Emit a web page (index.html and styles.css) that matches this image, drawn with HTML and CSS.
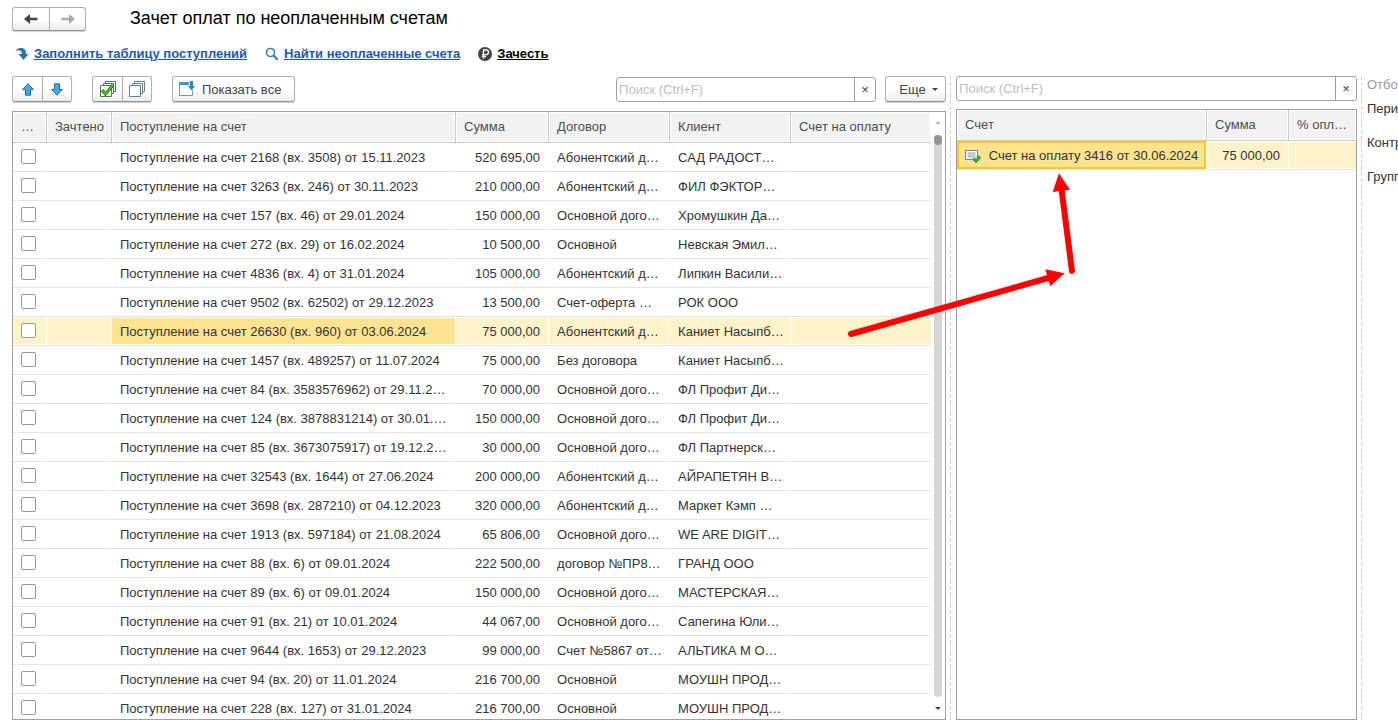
FILE: index.html
```html
<!DOCTYPE html>
<html lang="ru">
<head>
  <meta charset="UTF-8" />
  <meta name="viewport" content="width=device-width, initial-scale=1.0" />
  <title>Зачет оплат по неоплаченным счетам</title>
  <link rel="stylesheet" href="styles.css">
</head>
<body>

  <header class="title-bar">
    <div class="btn-group nav-group">
      <button class="btn" aria-label="Назад">
        <svg width="16" height="12" viewBox="0 0 16 12"><path d="M1 6l6-5v3.700h7.500v2.600H7V11z" fill="#444"/></svg>
      </button>
      <button class="btn" aria-label="Вперед">
        <svg width="16" height="12" viewBox="0 0 16 12"><path d="M15 6L9 1v3.700H1.500v2.600H9V11z" fill="#aaa"/></svg>
      </button>
    </div>
    <h1>Зачет оплат по неоплаченным счетам</h1>
  </header>

  <nav class="commands">
    <a href="#" class="command">
      <svg width="14" height="14" viewBox="0 0 14 14"><path d="M.5 4.500C1.500 1.500 4 1 6 1c3.500 0 5 2 5 6h2.500L8.500 13 3.500 7H7C7 4.500 5.500 3.200 3.500 3.200 2.200 3.200 1.200 3.700.5 4.500z" fill="#2a73a8"/></svg>
      <span>Заполнить таблицу поступлений</span>
    </a>
    <a href="#" class="command">
      <svg width="14" height="14" viewBox="0 0 14 14"><circle cx="5.500" cy="5.500" r="4" fill="none" stroke="#3b80b5" stroke-width="1.600"/><path d="M8.500 8.500l4.200 4.200" stroke="#3b80b5" stroke-width="2.200"/></svg>
      <span>Найти неоплаченные счета</span>
    </a>
    <a href="#" class="command command-main">
      <svg width="14" height="14" viewBox="0 0 14 14"><circle cx="7" cy="7" r="7" fill="#444"/><path d="M5.500 11.500V3h2.700a2.300 2.300 0 0 1 0 4.600H4M4 9.500h4" fill="none" stroke="#fff" stroke-width="1.300"/></svg>
      <span>Зачесть</span>
    </a>
  </nav>

  <main class="workspace">
    <section class="pane pane-payments">
      <div class="toolbar">
        <div class="btn-group">
          <button class="btn" aria-label="Вверх">
            <svg width="12" height="13" viewBox="0 0 12 13"><path d="M6 .7l5.300 5.800H8.500v5.700h-5V6.500H.7z" fill="#45a8e8" stroke="#286c9e"/></svg>
          </button>
          <button class="btn" aria-label="Вниз">
            <svg width="12" height="13" viewBox="0 0 12 13"><path d="M6 12.300L.7 6.500h2.800V.8h5v5.700h2.800z" fill="#45a8e8" stroke="#286c9e"/></svg>
          </button>
        </div>
        <div class="btn-group">
          <button class="btn" aria-label="Установить флажки">
            <svg width="16" height="16" viewBox="0 0 16 16" fill="#fff" stroke="#57707c"><path d="M5.500.5h10v10h-10z"/><path d="M3.500 2.500h10v10h-10z"/><path d="M.5 4.500h11v11H.5z"/><path d="M2 9l3.500 4L13 4" fill="none" stroke="#247c10" stroke-width="3.400"/><path d="M2.400 9.400l3.100 3.400L12.600 4.500" fill="none" stroke="#4fc21c" stroke-width="1.800"/></svg>
          </button>
          <button class="btn" aria-label="Снять флажки">
            <svg width="16" height="16" viewBox="0 0 16 16" fill="#fff" stroke="#66808c"><path d="M5.500.5h10v10h-10z"/><path d="M3.500 2.500h10v10h-10z"/><path d="M.5 4.500h11v11H.5z"/></svg>
          </button>
        </div>
        <button class="btn btn-text">
          <svg width="16" height="16" viewBox="0 0 16 16"><path d="M.5 2.500v12h13v-5M.5 2.500h9" fill="#fff" stroke="#8091a0"/><path d="M0 1h10v3H0z" fill="#3795dc"/><path d="M11 0h3v5h2l-3.500 4.500L9 5h2z" fill="#2585d0"/></svg>
          Показать все
        </button>
        <div class="search">
          <input type="text" placeholder="Поиск (Ctrl+F)" aria-label="Поиск поступлений">
          <button class="search-clear" aria-label="Очистить">×</button>
        </div>
        <button class="btn btn-more">Еще <span class="caret"></span></button>
      </div>

      <div class="grid-box">
        <table class="grid payments">
          <colgroup>
            <col class="col-check"><col class="col-done"><col><col class="col-sum"><col class="col-text"><col class="col-text"><col class="col-invoice">
          </colgroup>
          <thead>
            <tr><th>…</th><th>Зачтено</th><th>Поступление на счет</th><th>Сумма</th><th>Договор</th><th>Клиент</th><th>Счет на оплату</th></tr>
          </thead>
          <tbody>
            <tr><td><input type="checkbox" aria-label="2168"></td><td></td><td>Поступление на счет 2168 (вх. 3508) от 15.11.2023</td><td class="num">520 695,00</td><td>Абонентский д…</td><td>САД РАДОСТ…</td><td></td></tr>
            <tr><td><input type="checkbox" aria-label="3263"></td><td></td><td>Поступление на счет 3263 (вх. 246) от 30.11.2023</td><td class="num">210 000,00</td><td>Абонентский д…</td><td>ФИЛ ФЭКТОР…</td><td></td></tr>
            <tr><td><input type="checkbox" aria-label="157"></td><td></td><td>Поступление на счет 157 (вх. 46) от 29.01.2024</td><td class="num">150 000,00</td><td>Основной дого…</td><td>Хромушкин Да…</td><td></td></tr>
            <tr><td><input type="checkbox" aria-label="272"></td><td></td><td>Поступление на счет 272 (вх. 29) от 16.02.2024</td><td class="num">10 500,00</td><td>Основной</td><td>Невская Эмил…</td><td></td></tr>
            <tr><td><input type="checkbox" aria-label="4836"></td><td></td><td>Поступление на счет 4836 (вх. 4) от 31.01.2024</td><td class="num">105 000,00</td><td>Абонентский д…</td><td>Липкин Васили…</td><td></td></tr>
            <tr><td><input type="checkbox" aria-label="9502"></td><td></td><td>Поступление на счет 9502 (вх. 62502) от 29.12.2023</td><td class="num">13 500,00</td><td>Счет-оферта …</td><td>РОК ООО</td><td></td></tr>
            <tr class="selected"><td><input type="checkbox" aria-label="26630"></td><td></td><td class="current">Поступление на счет 26630 (вх. 960) от 03.06.2024</td><td class="num">75 000,00</td><td>Абонентский д…</td><td>Каниет Насыпб…</td><td></td></tr>
            <tr><td><input type="checkbox" aria-label="1457"></td><td></td><td>Поступление на счет 1457 (вх. 489257) от 11.07.2024</td><td class="num">75 000,00</td><td>Без договора</td><td>Каниет Насыпб…</td><td></td></tr>
            <tr><td><input type="checkbox" aria-label="84"></td><td></td><td>Поступление на счет 84 (вх. 3583576962) от 29.11.2…</td><td class="num">70 000,00</td><td>Основной дого…</td><td>ФЛ Профит Ди…</td><td></td></tr>
            <tr><td><input type="checkbox" aria-label="124"></td><td></td><td>Поступление на счет 124 (вх. 3878831214) от 30.01.…</td><td class="num">150 000,00</td><td>Основной дого…</td><td>ФЛ Профит Ди…</td><td></td></tr>
            <tr><td><input type="checkbox" aria-label="85"></td><td></td><td>Поступление на счет 85 (вх. 3673075917) от 19.12.2…</td><td class="num">30 000,00</td><td>Основной дого…</td><td>ФЛ Партнерск…</td><td></td></tr>
            <tr><td><input type="checkbox" aria-label="32543"></td><td></td><td>Поступление на счет 32543 (вх. 1644) от 27.06.2024</td><td class="num">200 000,00</td><td>Абонентский д…</td><td>АЙРАПЕТЯН В…</td><td></td></tr>
            <tr><td><input type="checkbox" aria-label="3698"></td><td></td><td>Поступление на счет 3698 (вх. 287210) от 04.12.2023</td><td class="num">320 000,00</td><td>Абонентский д…</td><td>Маркет Кэмп …</td><td></td></tr>
            <tr><td><input type="checkbox" aria-label="1913"></td><td></td><td>Поступление на счет 1913 (вх. 597184) от 21.08.2024</td><td class="num">65 806,00</td><td>Основной дого…</td><td>WE ARE DIGIT…</td><td></td></tr>
            <tr><td><input type="checkbox" aria-label="88"></td><td></td><td>Поступление на счет 88 (вх. 6) от 09.01.2024</td><td class="num">222 500,00</td><td>договор №ПР8…</td><td>ГРАНД ООО</td><td></td></tr>
            <tr><td><input type="checkbox" aria-label="89"></td><td></td><td>Поступление на счет 89 (вх. 6) от 09.01.2024</td><td class="num">150 000,00</td><td>Основной дого…</td><td>МАСТЕРСКАЯ…</td><td></td></tr>
            <tr><td><input type="checkbox" aria-label="91"></td><td></td><td>Поступление на счет 91 (вх. 21) от 10.01.2024</td><td class="num">44 067,00</td><td>Основной дого…</td><td>Сапегина Юли…</td><td></td></tr>
            <tr><td><input type="checkbox" aria-label="9644"></td><td></td><td>Поступление на счет 9644 (вх. 1653) от 29.12.2023</td><td class="num">99 000,00</td><td>Счет №5867 от…</td><td>АЛЬТИКА М О…</td><td></td></tr>
            <tr><td><input type="checkbox" aria-label="94"></td><td></td><td>Поступление на счет 94 (вх. 20) от 11.01.2024</td><td class="num">216 700,00</td><td>Основной</td><td>МОУШН ПРОД…</td><td></td></tr>
            <tr><td><input type="checkbox" aria-label="228"></td><td></td><td>Поступление на счет 228 (вх. 127) от 31.01.2024</td><td class="num">216 700,00</td><td>Основной</td><td>МОУШН ПРОД…</td><td></td></tr>
          </tbody>
        </table>
        <div class="scrollbar">
          <span class="scroll-up"></span>
          <div class="scroll-track"><div class="scroll-thumb"></div></div>
          <span class="scroll-down"></span>
        </div>
      </div>
    </section>

    <div class="splitter"></div>

    <section class="pane pane-invoices">
      <div class="search">
        <input type="text" placeholder="Поиск (Ctrl+F)" aria-label="Поиск счетов">
        <button class="search-clear" aria-label="Очистить">×</button>
      </div>
      <div class="grid-box">
        <table class="grid invoices">
          <colgroup><col><col class="col-inv-sum"><col class="col-percent"></colgroup>
          <thead>
            <tr><th>Счет</th><th>Сумма</th><th>% опл…</th></tr>
          </thead>
          <tbody>
            <tr class="selected">
              <td class="current focused">
                <svg width="16" height="13" viewBox="0 0 16 13"><path d="M.5.500h12v9H.5z" fill="#fff" stroke="#75808a"/><path d="M2.500 3h8M2.500 5h8M2.500 7h8" stroke="#8a949c"/><path d="M8.500 8.500l2.500 2.500 4-4.500" fill="none" stroke="#15831c" stroke-width="3"/><path d="M8.800 8.800l2.200 2 3.600-4" fill="none" stroke="#3bd145" stroke-width="1.400"/></svg>
                Счет на оплату 3416 от 30.06.2024
              </td>
              <td class="num">75 000,00</td>
              <td></td>
            </tr>
          </tbody>
        </table>
      </div>
    </section>

    <div class="splitter"></div>

    <aside class="filters">
      <h2>Отбо</h2>
      <p>Пери</p>
      <p>Контр</p>
      <p>Групп</p>
    </aside>
  </main>

  <svg class="pointer" width="230" height="170" viewBox="848 170 230 170" stroke="#f00" stroke-width="6" stroke-linecap="round" fill="#f00">
    <path d="M851 334L1050 277.500"/>
    <path d="M1064.700 273.300l-19.400-4 5 17z" stroke="none"/>
    <path d="M1072 271L1061.500 189"/>
    <path d="M1059 173.300l-6.300 18.700 17.300-2.300z" stroke="none"/>
  </svg>

</body>
</html>
```
FILE: styles.css
```css
:root {
  --border: #a0a0a0;
  --line: #e4e4e4;
  --head: #f2f2f2;
  --text: #333333;
  --row-selected: #fdf2c8;
  --cell-selected: #fde38f;
  --link: #1f57b8;
}

* {
  margin: 0;
  padding: 0;
  box-sizing: border-box;
}

body {
  display: flex;
  flex-direction: column;
  height: 100vh;
  padding: 6px 0 8px 12px;
  overflow: hidden;
  font-family: "Liberation Sans", Arial, sans-serif;
  font-size: 13px;
  color: var(--text);
  background: #fff;
}

button,
input {
  font: inherit;
  color: inherit;
}

svg {
  flex: none;
}

.title-bar {
  display: flex;
  align-items: center;
  gap: 44px;
  height: 25px;
}

h1 {
  font-size: 18px;
  font-weight: normal;
  color: #000;
}

/* Buttons */
.btn {
  display: flex;
  align-items: center;
  justify-content: center;
  height: 26px;
  border: 1px solid #b0b0b0;
  border-bottom-color: #919191;
  border-radius: 3px;
  background: linear-gradient(#fff 50%, #ececec);
  box-shadow: 0 1px 1px #d0d0d0;
  color: #444;
}

.btn-group {
  display: flex;
}

.btn-group .btn {
  width: 30px;
}

.btn-group .btn:first-child {
  width: 31px;
  border-radius: 3px 0 0 3px;
}

.btn-group .btn:last-child {
  margin-left: -1px;
  border-radius: 0 3px 3px 0;
}

.nav-group .btn,
.nav-group .btn:first-child {
  width: 38px;
  height: 24px;
}

.nav-group .btn:last-child {
  width: 37px;
}

.btn-text {
  justify-content: flex-start;
  gap: 7px;
  width: 123px;
  padding-left: 6px;
}

.btn-more {
  gap: 6px;
  width: 61px;
  padding-left: 6px;
}

.caret {
  border: 3px solid transparent;
  border-top-color: #444;
  border-bottom: 0;
}

/* Commands */
.commands {
  display: flex;
  gap: 18px;
  margin: 14px 0 14px 3px;
}

.command {
  display: flex;
  align-items: center;
  gap: 5px;
  height: 17px;
  font-weight: bold;
  color: var(--link);
}

.command-main {
  color: #000;
}

/* Panes */
.workspace {
  display: flex;
  flex: 1;
  min-height: 0;
}

.pane {
  display: flex;
  flex-direction: column;
  min-width: 0;
}

.pane-payments {
  flex: 233 1 0;
}

.pane-invoices {
  flex: 100 1 0;
  gap: 8px;
}

.splitter {
  width: 1px;
  margin: 0 5px 0 4px;
  background: repeating-linear-gradient(#d2d2d2 0 4px, transparent 4px 6px);
}

.toolbar {
  display: flex;
  align-items: center;
  gap: 20px;
  margin-bottom: 9px;
}

.search {
  display: flex;
  height: 25px;
  border: 1px solid var(--border);
  border-radius: 3px;
  background: #fff;
}

.search input {
  flex: 1;
  min-width: 0;
  padding: 0 2px;
  border: 0;
  outline: 0;
  background: none;
}

.search input::placeholder {
  color: #bdbdbd;
}

.search-clear {
  width: 21px;
  border: 0;
  border-left: 1px solid var(--border);
  background: none;
  color: #444;
}

.toolbar .search {
  width: 260px;
  margin-left: auto;
  margin-right: -11px;
}

/* Tables */
.grid-box {
  display: flex;
  flex: 1;
  align-items: flex-start;
  min-height: 0;
  border: 1px solid var(--border);
  overflow: hidden;
}

.grid {
  flex: 1;
  min-width: 0;
  width: 100%;
  table-layout: fixed;
  border-collapse: separate;
  border-spacing: 0;
}

.grid th,
.grid td {
  padding: 0 8px;
  overflow: hidden;
  white-space: nowrap;
  text-align: left;
}

.grid th {
  height: 31px;
  padding-bottom: 2px;
  border-right: 1px solid #c8c8c8;
  border-bottom: 1px solid #c8c8c8;
  background: var(--head);
  box-shadow: inset 0 0 0 1px #fff;
  font-weight: normal;
  color: #4d4d4d;
}

.grid th:last-child,
.grid td:last-child {
  border-right: 0;
}

.grid td {
  height: 29px;
  border-right: 1px solid #fff;
  border-bottom: 1px solid var(--line);
}

.grid td.num {
  text-align: right;
}

.grid .selected td {
  background: var(--row-selected);
  box-shadow: inset 0 1px #fff, inset 0 -1px #fff;
}

.grid .selected .current {
  background: var(--cell-selected);
}

.grid .selected .focused {
  box-shadow: inset 0 0 0 2px #f9c922;
}

.focused svg {
  margin-right: 4px;
  vertical-align: -3px;
}

.col-check { width: 34px; }
.col-done { width: 65px; }
.col-sum { width: 93px; }
.col-text { width: 121px; }
.col-invoice { width: 140px; }
.col-inv-sum { width: 82px; }
.col-percent { width: 67px; }

.grid input {
  display: block;
  width: 15px;
  height: 15px;
  margin-bottom: 2px;
  appearance: none;
  border: 1px solid #999;
  border-radius: 2px;
  background: #fff;
}

/* Scrollbar */
.scrollbar {
  display: flex;
  flex-direction: column;
  align-items: center;
  align-self: stretch;
  width: 14px;
  padding: 9px 0 9px;
}

.scroll-up,
.scroll-down {
  border: 3px solid transparent;
}

.scroll-up {
  border-top: 0;
  border-bottom-color: #bbb;
}

.scroll-down {
  border-bottom: 0;
  border-top-color: #444;
}

.scroll-track {
  flex: 1;
  width: 8px;
  margin: 11px 0 10px;
  border-radius: 4px;
  background: #d5d5d5;
}

.scroll-thumb {
  height: 10px;
  border-radius: 4px;
  background: #959595;
}

/* Filters */
.filters {
  width: 31px;
  overflow: hidden;
  white-space: nowrap;
}

.filters h2 {
  height: 24px;
  line-height: 17px;
  font-size: 13px;
  font-weight: normal;
  color: #999;
}

.filters p {
  height: 34px;
  line-height: 17px;
}

.pointer {
  position: absolute;
  left: 848px;
  top: 170px;
}
```
